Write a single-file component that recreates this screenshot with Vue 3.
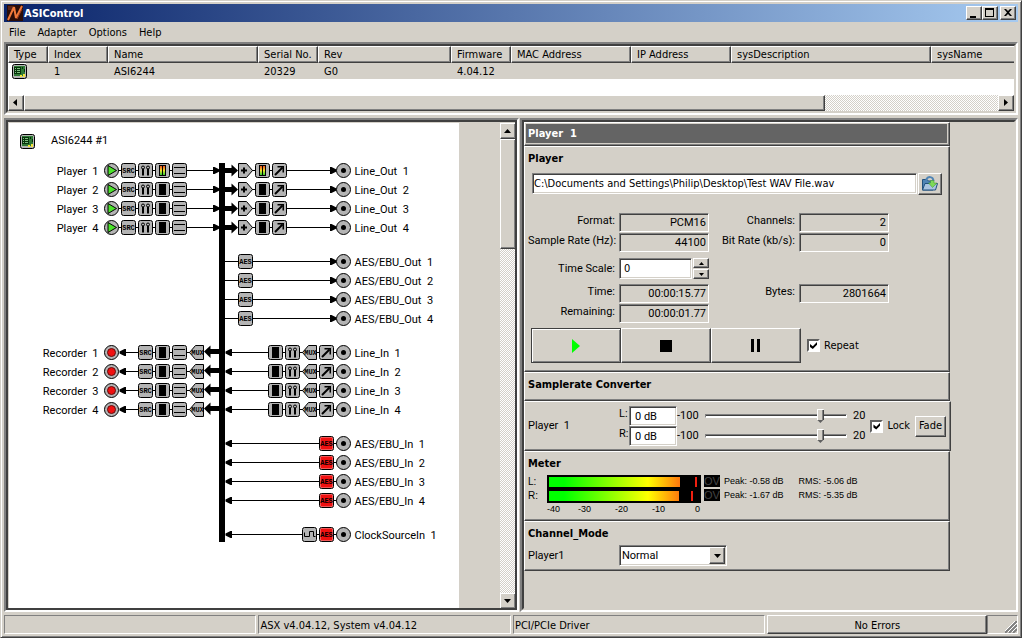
<script setup>
import { ref } from 'vue'

const menus = ['File', 'Adapter', 'Options', 'Help']
const columns = [
  ['Type', 'c40', ''],
  ['Index', 'c60', '1'],
  ['Name', 'c150', 'ASI6244'],
  ['Serial No.', 'c60', '20329'],
  ['Rev', 'c133', 'G0'],
  ['Firmware', 'c60', '4.04.12'],
  ['MAC Address', 'c120', ''],
  ['IP Address', 'c100', ''],
  ['sysDescription', 'c200', ''],
  ['sysName', '', '']
]

const rowsFrom = (y) => [0, 1, 2, 3].map((i) => ({ n: i + 1, y: y + i * 19 }))
const players = rowsFrom(47)
const aesOuts = rowsFrom(138)
const recorders = rowsFrom(229)
const aesIns = rowsFrom(320)
const clockY = 411

const path = ref('C:\\Documents and Settings\\Philip\\Desktop\\Test WAV File.wav')
const timeScale = ref('0')
const repeat = ref(true)
const lock = ref(true)
const mode = ref('Normal')
const gains = ref([
  { ch: 'L', text: '0 dB', value: 0 },
  { ch: 'R', text: '0 dB', value: 0 }
])
const meters = [
  { ch: 'L', peak: -0.58, rms: -5.06 },
  { ch: 'R', peak: -1.67, rms: -5.35 }
]
const pct = (db) => ((db + 40) / 40) * 100 + '%'
</script>

<template>
  <div class="window">
    <header class="title">
      <svg class="logo" width="16" height="16" viewBox="0 0 16 16">
        <rect width="16" height="16" fill="#2a0d08" />
        <path d="M1 2h5M1 4h4" stroke="#8a3a22" />
        <path d="M1 15L7 2M7 2L9 13M9 13L15 1" stroke="#f0793a" stroke-width="2" fill="none" />
        <path d="M10 14L15 4" stroke="#a8421e" />
      </svg>
      <h1>ASIControl</h1>
      <button class="raised cap" aria-label="Minimize"><svg width="14" height="12"><path d="M3 9h6v2H3z" /></svg></button>
      <button class="raised cap" aria-label="Maximize"><svg width="14" height="12"><path d="M2 1h9v9H2zM3 3v6h7V3z" fill-rule="evenodd" /></svg></button>
      <button class="raised cap close" aria-label="Close"><svg width="14" height="12"><path d="M3 2h2l2 2 2-2h2L8 5.500l3 3.500H9L7 7 5 9H3l3-3.500z" /></svg></button>
    </header>

    <nav class="menu">
      <button v-for="m in menus" :key="m">{{ m }}</button>
    </nav>

    <section class="frame adapters">
      <div class="sunken list">
        <table>
          <thead>
            <tr><th v-for="c in columns" :key="c[0]" :class="c[1]">{{ c[0] }}</th></tr>
          </thead>
          <tbody>
            <tr>
              <td v-for="(c, i) in columns" :key="c[0]">
                <svg v-if="i === 0" class="board" width="15" height="15"><use href="#board" /></svg>
                <template v-else>{{ c[2] }}</template>
              </td>
            </tr>
          </tbody>
        </table>
        <div class="hscroll">
          <button class="raised arrow" aria-label="Scroll left"><svg width="14" height="14"><path d="M8 3v7L4 6.500z" /></svg></button>
          <div class="raised hthumb"></div>
          <div class="rest"></div>
          <button class="raised arrow" aria-label="Scroll right"><svg width="14" height="14"><path d="M5 3v7l4-3.500z" /></svg></button>
        </div>
      </div>
    </section>

    <main class="body">
      <section class="frame">
        <div class="canvas">
          <svg class="diagram" width="450" height="486" viewBox="0 0 450 486">
            <defs>
              <symbol id="board" viewBox="0 0 15 15">
                <rect x=".5" y=".5" width="14" height="14" rx="2" fill="#b4b4b4" stroke="#000" />
                <rect x="2" y="2" width="11" height="10" fill="#2f7a35" />
                <path d="M2 3h7v7H2zM10 3h1v2h-1zM12 5h1v3h-1z" fill="#06330b" />
                <path d="M3 4h1v1H3zM5 4h3v1H5zM3 6h1v1H3zM5 6h3v1H5zM3 8h1v1H3zM5 8h3v1H5z" fill="#7fc07f" />
                <path d="M8 11h2v2H8zM11 10h2v3h-2z" fill="#f1e33a" />
              </symbol>
              <g id="box"><rect x="-7" y="-7" width="14" height="14" rx="2" fill="#b4b4b4" stroke="#000" /></g>
              <g id="play">
                <circle r="7" fill="#b4b4b4" stroke="#000" />
                <path d="M-3.500 -5L5 0L-3.500 5z" fill="#4be32b" stroke="#000" />
              </g>
              <g id="rec">
                <circle r="7" fill="#b4b4b4" stroke="#000" />
                <circle r="4" fill="#f01010" stroke="#601010" />
              </g>
              <g id="jack">
                <circle r="7" fill="#b4b4b4" stroke="#000" />
                <circle r="2.500" />
              </g>
              <g id="src"><use href="#box" /><text class="tag" y="2">SRC</text></g>
              <g id="aes"><use href="#box" /><text class="tag" y="2">AES</text></g>
              <g id="aesred">
                <rect x="-7" y="-7" width="14" height="14" rx="2" fill="#f0a0a0" stroke="#000" />
                <rect x="-6" y="-6" width="12" height="12" rx="1" fill="#f01010" />
                <text class="tag" y="2">AES</text>
              </g>
              <g id="vol">
                <use href="#box" />
                <path d="M-2.500 -4V5M2.500 -4V5" stroke="#000" stroke-width="2" />
                <circle cx="-2.500" cy="-3" r="1.500" fill="#b4b4b4" stroke="#000" />
                <circle cx="2.500" cy="-3" r="1.500" fill="#b4b4b4" stroke="#000" />
              </g>
              <g id="meter"><use href="#box" /><rect x="-3.500" y="-5.500" width="7" height="11" /></g>
              <g id="live">
                <use href="#meter" />
                <path d="M-2.500 -4.500h2v9h-2zM.5 -4.500h2v9h-2z" fill="url(#lv)" />
              </g>
              <linearGradient id="lv" x1="0" y1="0" x2="0" y2="1">
                <stop offset="0" stop-color="#f05020" />
                <stop offset=".5" stop-color="#f0e030" />
                <stop offset="1" stop-color="#30d030" />
              </linearGradient>
              <g id="lines"><use href="#box" /><path d="M-5.500 -3H5.500M-5.500 3H5.500" stroke="#000" /></g>
              <g id="mux">
                <path d="M7 -7H-1L-7 0L-1 7H7z" fill="#b4b4b4" stroke="#000" />
                <text class="tag" x="1" y="2">MUX</text>
              </g>
              <g id="plus">
                <path d="M-7 -7H1L7 0L1 7H-7z" fill="#b4b4b4" stroke="#000" />
                <path d="M-4.500 0H1.500M-1.500 -3V3" stroke="#000" stroke-width="2" />
              </g>
              <g id="level">
                <use href="#box" />
                <path d="M-4.500 4.500L3 -3" stroke="#000" stroke-width="2" />
                <path d="M-2 -4.500H4.500V2H3V-3H-2z" />
              </g>
              <g id="clock"><use href="#box" /><path d="M-5 -2V2H0V-3H4V2H6" fill="none" stroke="#000" /></g>
              <path id="right" d="M-6.500 -3.500H-5L0 -1V1L-5 3.500H-6.500z" />
              <path id="left" d="M6.500 -3.500H5L0 -1V1L5 3.500H6.500z" />
            </defs>

            <svg x="11" y="11" width="15" height="15"><use href="#board" /></svg>
            <text x="42" y="21">ASI6244 #1</text>
            <rect x="210" y="40" width="6" height="379" />

            <g v-for="r in players" :key="'p' + r.n" :transform="`translate(.5 ${r.y + 0.5})`">
              <path class="wire" d="M102 0H206M236 0H324" />
              <text x="89" y="4" text-anchor="end">Player&nbsp; {{ r.n }}</text>
              <use href="#play" x="102" /><use href="#src" x="119" /><use href="#vol" x="136" />
              <use :href="r.n === 1 ? '#live' : '#meter'" x="153" /><use href="#lines" x="170" />
              <use href="#right" x="210" />
              <path d="M215 -2.500H222V-6L228.500 0L222 6V2.500H215z" />
              <use href="#plus" x="236" /><use :href="r.n === 1 ? '#live' : '#meter'" x="253" />
              <use href="#level" x="270" /><use href="#right" x="327" /><use href="#jack" x="334" />
              <text x="345" y="4">Line_Out&nbsp; {{ r.n }}</text>
            </g>

            <g v-for="r in aesOuts" :key="'o' + r.n" :transform="`translate(.5 ${r.y + 0.5})`">
              <path class="wire" d="M215 0H324" />
              <use href="#aes" x="236" /><use href="#right" x="327" /><use href="#jack" x="334" />
              <text x="345" y="4">AES/EBU_Out&nbsp; {{ r.n }}</text>
            </g>

            <g v-for="r in recorders" :key="'r' + r.n" :transform="`translate(.5 ${r.y + 0.5})`">
              <path class="wire" d="M112 0H187M219 0H334" />
              <text x="89" y="4" text-anchor="end">Recorder&nbsp; {{ r.n }}</text>
              <use href="#rec" x="102" /><use href="#left" x="110" /><use href="#src" x="136" />
              <use href="#meter" x="153" /><use href="#lines" x="170" /><use href="#mux" x="187" />
              <path d="M210 -3.500H201V-7L194.500 -1L201 5.500V1.500H210z" />
              <use href="#left" x="216" /><use href="#meter" x="266" /><use href="#vol" x="283" />
              <use href="#mux" x="300" /><use href="#level" x="317" /><use href="#jack" x="334" />
              <text x="345" y="4">Line_In&nbsp; {{ r.n }}</text>
            </g>

            <g v-for="r in aesIns" :key="'i' + r.n" :transform="`translate(.5 ${r.y + 0.5})`">
              <path class="wire" d="M219 0H334" />
              <use href="#left" x="216" /><use href="#aesred" x="317" /><use href="#jack" x="334" />
              <text x="345" y="4">AES/EBU_In&nbsp; {{ r.n }}</text>
            </g>

            <g :transform="`translate(.5 ${clockY + 0.5})`">
              <path class="wire" d="M219 0H334" />
              <use href="#left" x="216" /><use href="#clock" x="300" /><use href="#aesred" x="317" />
              <use href="#jack" x="334" />
              <text x="345" y="4">ClockSourceIn&nbsp; 1</text>
            </g>
          </svg>
          <div class="vscroll">
            <button class="raised arrow" aria-label="Scroll up"><svg width="14" height="14"><path d="M3 9h7L6.500 5z" /></svg></button>
            <div class="raised vthumb"></div>
            <div class="rest"></div>
            <button class="raised arrow" aria-label="Scroll down"><svg width="14" height="14"><path d="M3 5h7L6.500 9z" /></svg></button>
          </div>
        </div>
      </section>

      <section class="frame">
        <div class="sunken props">
          <div class="panel head"><h2>Player&nbsp; 1</h2></div>

          <div class="panel player">
            <h3>Player</h3>
            <div class="file">
              <input v-model="path" class="sunken ui" type="text" aria-label="File path" />
              <button class="raised" aria-label="Open file">
                <svg width="18" height="16" viewBox="0 0 18 16">
                  <path d="M1.500 14V3.500H6L7.500 5H12V14z" fill="#4f84b4" stroke="#20507e" />
                  <path d="M1.500 14L4 7.500H16.500L14.500 14z" fill="#a9c4e0" stroke="#20507e" />
                  <path d="M5 4C7 0 12 0 12.500 5" fill="none" stroke="#4f84b4" stroke-width="2" />
                  <path d="M9.500 4.500h3.500V7h3L11.500 11.500 7.500 7h2z" fill="#7ed957" stroke="#3f8f33" stroke-width=".5" />
                </svg>
              </button>
            </div>

            <div class="fields">
              <label for="fmt">Format:</label><output id="fmt" class="sunken">PCM16</output>
              <label for="chn">Channels:</label><output id="chn" class="sunken">2</output>
              <label for="rate">Sample Rate (Hz):</label><output id="rate" class="sunken">44100</output>
              <label for="bit">Bit Rate (kb/s):</label><output id="bit" class="sunken">0</output>
              <label class="mid" for="scale">Time Scale:</label>
              <div class="spin mid">
                <input id="scale" v-model="timeScale" class="sunken ui" type="text" />
                <div class="steps">
                  <button class="raised" aria-label="Increase"><svg width="5" height="3"><path d="M0 3h5L2.500 0z" /></svg></button>
                  <button class="raised" aria-label="Decrease"><svg width="5" height="3"><path d="M0 0h5L2.500 3z" /></svg></button>
                </div>
              </div>
              <span></span><span></span>
              <label for="time">Time:</label><output id="time" class="sunken">00:00:15.77</output>
              <label for="bytes">Bytes:</label><output id="bytes" class="sunken">2801664</output>
              <label for="remain">Remaining:</label><output id="remain" class="sunken">00:00:01.77</output>
            </div>

            <div class="transport">
              <button class="raised focus" aria-label="Play"><svg width="8" height="14"><path d="M0 0v14l8-7z" fill="#0f0" /></svg></button>
              <button class="raised" aria-label="Stop"><svg width="12" height="12"><path d="M0 0h12v12H0z" /></svg></button>
              <button class="raised" aria-label="Pause"><svg width="10" height="13"><path d="M0 0h3v13H0zM6 0h3v13H6z" /></svg></button>
              <label class="check"><input v-model="repeat" type="checkbox" />Repeat</label>
            </div>
          </div>

          <div class="panel conv"><h3>Samplerate Converter</h3></div>

          <div class="panel volume">
            <span class="name">Player&nbsp; 1</span>
            <div class="gains">
              <div v-for="g in gains" :key="g.ch" class="gain">
                <label :for="'gain' + g.ch">{{ g.ch }}:</label>
                <input :id="'gain' + g.ch" v-model="g.text" class="sunken" type="text" />
                <span class="min">-100</span>
                <input v-model="g.value" type="range" min="-100" max="20" :aria-label="g.ch + ' gain'" />
                <span class="max">20</span>
              </div>
            </div>
            <label class="check"><input v-model="lock" type="checkbox" />Lock</label>
            <button class="raised fade">Fade</button>
          </div>

          <div class="panel metering">
            <h3>Meter</h3>
            <div class="meter">
              <div class="col chs"><span v-for="m in meters" :key="m.ch">{{ m.ch }}:</span></div>
              <div>
                <div class="bars">
                  <div v-for="m in meters" :key="m.ch" class="bar">
                    <i class="off" :style="{ left: pct(m.rms) }"></i>
                    <i class="peak" :style="{ left: pct(m.peak) }"></i>
                  </div>
                </div>
                <div class="scale"><span>-40</span><span>-30</span><span>-20</span><span>-10</span><span>0</span></div>
              </div>
              <div class="col ov"><span v-for="m in meters" :key="m.ch">OV</span></div>
              <div class="col"><span v-for="m in meters" :key="m.ch">Peak: {{ m.peak }} dB</span></div>
              <div class="col rms"><span v-for="m in meters" :key="m.ch">RMS: {{ m.rms }} dB</span></div>
            </div>
          </div>

          <div class="panel channel">
            <h3>Channel_Mode</h3>
            <div class="moderow">
              <label for="mode">Player1</label>
              <div class="sunken combo">
                <select id="mode" v-model="mode"><option>Normal</option></select>
                <span class="raised drop"><svg width="7" height="4"><path d="M0 0h7L3.500 4z" /></svg></span>
              </div>
            </div>
          </div>
        </div>
      </section>
    </main>

    <footer class="status">
      <span class="cell"></span>
      <span class="cell">ASX v4.04.12, System v4.04.12</span>
      <span class="cell">PCI/PCIe Driver</span>
      <button class="raised">No Errors</button>
      <span class="cell grip">
        <svg width="12" height="12"><path d="M0 12L12 0M4 12L12 4M8 12L12 8" stroke="#808080" stroke-width="2" /><path d="M-1 11L11 -1M3 11L12 2M7 11L12 6" stroke="#fff" /></svg>
      </span>
    </footer>
  </div>
</template>

<style>
html, body { margin: 0; background: #d4d0c8; }
</style>

<style scoped>
* { box-sizing: border-box; }
.window {
  height: 100vh; min-height: 638px; padding: 3px; display: flex; flex-direction: column;
  background: #d4d0c8; color: #000;
  border: 1px solid; border-color: #d4d0c8 #404040 #404040 #d4d0c8;
  box-shadow: inset 1px 1px #fff, inset -1px -1px #808080;
  font: 11px/14px "DejaVu Sans Condensed", "DejaVu Sans", sans-serif;
}
button, input, select { font: inherit; color: inherit; margin: 0; padding: 0; border-radius: 0; }
button { border: 0; background: none; }
h1, h2, h3 { margin: 0; font-size: 11px; line-height: 14px; font-weight: bold; }
svg { display: block; flex: none; }

.raised {
  background: #d4d0c8; border: 1px solid; border-color: #fff #404040 #404040 #fff;
  box-shadow: inset -1px -1px #808080;
  display: flex; align-items: center; justify-content: center;
}
.sunken {
  border: 1px solid; border-color: #808080 #fff #fff #808080;
  box-shadow: inset 1px 1px #404040, inset -1px -1px #d4d0c8;
}

.title {
  height: 18px; flex: none; display: flex; align-items: center; padding: 0 2px 0 3px;
  background: linear-gradient(90deg, #0a246a, #a6caf0); color: #fff;
}
.title h1 { margin-left: 1px; padding-top: 1px; flex: 1; }
.cap { width: 16px; height: 14px; }
.close { margin-left: 2px; }
.cap svg { fill: #000; }

.menu { height: 20px; flex: none; display: flex; gap: 12px; padding: 1px 5px 0; }

.frame { min-width: 0; border: 2px solid; border-color: #808080 #fff #fff #808080; }
.frame > .sunken { border: 2px solid; border-color: #404040 #d4d0c8 #d4d0c8 #404040; box-shadow: none; }
.adapters { height: 73px; flex: none; }
.list { height: 100%; background: #fff; display: flex; flex-direction: column; overflow: hidden; }
table { width: 100%; table-layout: fixed; border-collapse: separate; border-spacing: 0; }
th {
  height: 17px; padding: 1px 0 0 5px; text-align: left; font-weight: normal; line-height: 14px;
  background: #d4d0c8; border: 1px solid; border-color: #fff #404040 #404040 #fff;
  box-shadow: inset -1px -1px #808080; white-space: nowrap;
}
th:last-child { border-right: 0; box-shadow: inset 0 -1px #808080; }
td { height: 16px; padding: 1px 0 0 6px; line-height: 15px; background: #d4d0c8; }
td:first-child { padding: 0 0 0 4px; background: linear-gradient(90deg, #fff 18px, #d4d0c8 18px); }
.c40 { width: 40px; }
.c60 { width: 60px; }
.c100 { width: 100px; }
.c120 { width: 120px; }
.c133 { width: 133px; }
.c150 { width: 150px; }
.c200 { width: 200px; }

.hscroll { margin-top: auto; height: 16px; display: flex; }
.arrow { width: 16px; height: 16px; flex: none; }
.hthumb { flex: 801; }
.rest { flex: 173; background: repeating-conic-gradient(#fff 0 25%, #d4d0c8 0 50%) 0 0 / 2px 2px; }

.body { flex: 1; min-height: 0; margin-top: 3px; display: grid; grid-template-columns: 515fr 498fr; gap: 1px; }
.canvas {
  height: 100%; display: flex; justify-content: space-between; overflow: hidden;
  border: 1px solid #000; outline: 2px solid #404040; outline-offset: -2px;
  padding: 2px 0 0 2px;
}
.diagram { background: #fff; font: 11px Roboto, "Liberation Sans", Arial, sans-serif; height: 100%; }
.wire { stroke: #000; fill: none; }
.tag { font: bold 7px "Liberation Mono", monospace; text-anchor: middle; }
.vscroll { width: 16px; display: flex; flex-direction: column; }
.vthumb { flex: 109; }
.vscroll .rest { flex: 346; }

.props { height: 100%; padding-right: 64px; font-family: Roboto, "Liberation Sans", Arial, sans-serif; }
.frame > .props { border-color: #404040 transparent transparent #404040; }
.panel {
  border: 1px solid; border-color: #fff #404040 #404040 #fff;
  box-shadow: inset -1px -1px #808080; padding: 0 3px;
}
h2, h3, .ui, .check, .fade { font-family: "DejaVu Sans Condensed", "DejaVu Sans", sans-serif; }
.head { height: 24px; padding: 1px 2px 2px 1px; }
h2 { height: 19px; line-height: 20px; padding-left: 2px; background: #646464; color: #fff; }
.player { height: 226px; padding-top: 5px; }
.file { display: flex; gap: 1px; margin: 7px 4px 0; }
.file input { flex: 1; min-width: 0; height: 21px; background: #fff; padding: 0 1px; }
.file button { width: 24px; height: 22px; }
.fields {
  margin-top: 18px; display: grid; grid-template-columns: 87px 90px 82px 90px;
  grid-template-rows: 20px 20px 31px 20px 20px; column-gap: 4px; text-align: right;
}
.fields label { padding-top: 1px; white-space: nowrap; }
.fields .mid { align-self: center; }
output { height: 19px; padding: 0 2px; line-height: 17px; }
.spin { display: flex; gap: 1px; }
.spin input { flex: 1; min-width: 0; height: 21px; background: #fff; padding: 0 4px; }
.steps { width: 16px; display: flex; flex-direction: column; gap: 1px; }
.steps button { height: 10px; width: 16px; }
.transport { display: flex; margin: 4px 3px 0; height: 35px; }
.transport button { width: 90px; }
.transport .focus { border-color: #404040; box-shadow: inset 1px 1px #fff, inset -1px -1px #808080; }
.check { display: flex; align-items: center; gap: 4px; }
.transport .check { margin-left: 6px; }
input[type="checkbox"] {
  appearance: none; width: 13px; height: 13px; border: 2px solid;
  border-color: #606060 #fff #fff #606060; background: #fff;
}
input[type="checkbox"]:checked::after {
  content: ""; display: block; width: 7px; height: 7px; margin: 1px; background: #000;
  clip-path: polygon(0 30%, 40% 60%, 100% 0, 100% 40%, 40% 100%, 0 70%);
}
.conv { height: 29px; padding-top: 5px; }
.volume { height: 50px; display: flex; align-items: center; margin-right: -1px; padding-right: 4px; }
.name { width: 91px; }
.gains { flex: 1; min-width: 0; display: grid; gap: 0; }
.gain { height: 20px; display: flex; align-items: center; }
.gain label { width: 10px; height: 18px; }
.gain input[type="text"] { width: 48px; height: 20px; background: #fff; padding: 0 5px; }
.min { width: 28px; }
.max { margin-left: 6px; }
input[type="range"] { appearance: none; background: none; flex: 1; min-width: 0; height: 16px; }
input[type="range"]::-webkit-slider-runnable-track {
  height: 4px; border: 1px solid; border-color: #808080 #fff #fff #808080; background: linear-gradient(#404040 1px, #fff 1px);
}
input[type="range"]::-webkit-slider-thumb {
  appearance: none; width: 7px; height: 14px; margin-top: -6px;
  background:
    linear-gradient(45deg, transparent 50%, #606060 50%) 0 0 / 0 0,
    linear-gradient(#fff, #fff) 0 0 / 7px 1px no-repeat,
    linear-gradient(90deg, #fff 1px, #d4d0c8 1px 5px, #808080 5px 6px, #404040 6px) 0 0 / 7px 11px no-repeat,
    #606060;
  clip-path: polygon(0 0, 100% 0, 100% 75%, 50% 100%, 0 75%);
}
.volume .check { margin: 0 5px; }
.fade { width: 31px; height: 21px; }
.metering { height: 70px; padding-top: 5px; }
.meter { display: flex; margin-top: 4px; font: 9px "Liberation Sans", Arial, sans-serif; }
.col { display: grid; grid-auto-rows: 14px; align-content: start; line-height: 13px; }
.chs { width: 19px; font-size: 10px; }
.bars { width: 154px; height: 28px; background: #000; padding: 2px; display: grid; gap: 4px; }
.bar { position: relative; height: 10px; overflow: hidden; background: linear-gradient(90deg, #0f0 10%, #ff0 66%, #ff5a10 92%); }
.bar i { position: absolute; top: 0; bottom: 0; }
.off { right: 0; background: #000; }
.peak { width: 2px; margin-left: -2px; background: #f02010; }
.scale { display: grid; grid-template-columns: 31px 37px 37px 43px auto; line-height: 12px; }
.ov { margin: 0 4px 0 3px; row-gap: 2px; grid-auto-rows: 12px; color: #444; font-size: 11px; }
.ov span { width: 16px; background: #000; text-align: center; }
.rms { margin-left: 15px; }
.channel { height: 50px; padding-top: 5px; }
.moderow { display: flex; align-items: center; margin-top: 4px; }
.moderow label { width: 91px; }
.combo { width: 108px; height: 21px; display: flex; background: #fff; padding: 1px; }
.combo select { appearance: none; border: 0; background: none; flex: 1; min-width: 0; padding-left: 1px; }
.drop { width: 16px; }

.status { height: 19px; flex: none; margin-top: 3px; display: flex; gap: 2px; }
.cell {
  flex: 252; min-width: 0; padding: 1px 0 0 1px; line-height: 18px; white-space: nowrap;
  border: 1px solid; border-color: #808080 #fff #fff #808080;
}
.status button { flex: 220; padding-top: 2px; }
.grip { flex: 28; display: flex; justify-content: flex-end; align-items: flex-end; margin-left: -2px; }
</style>
